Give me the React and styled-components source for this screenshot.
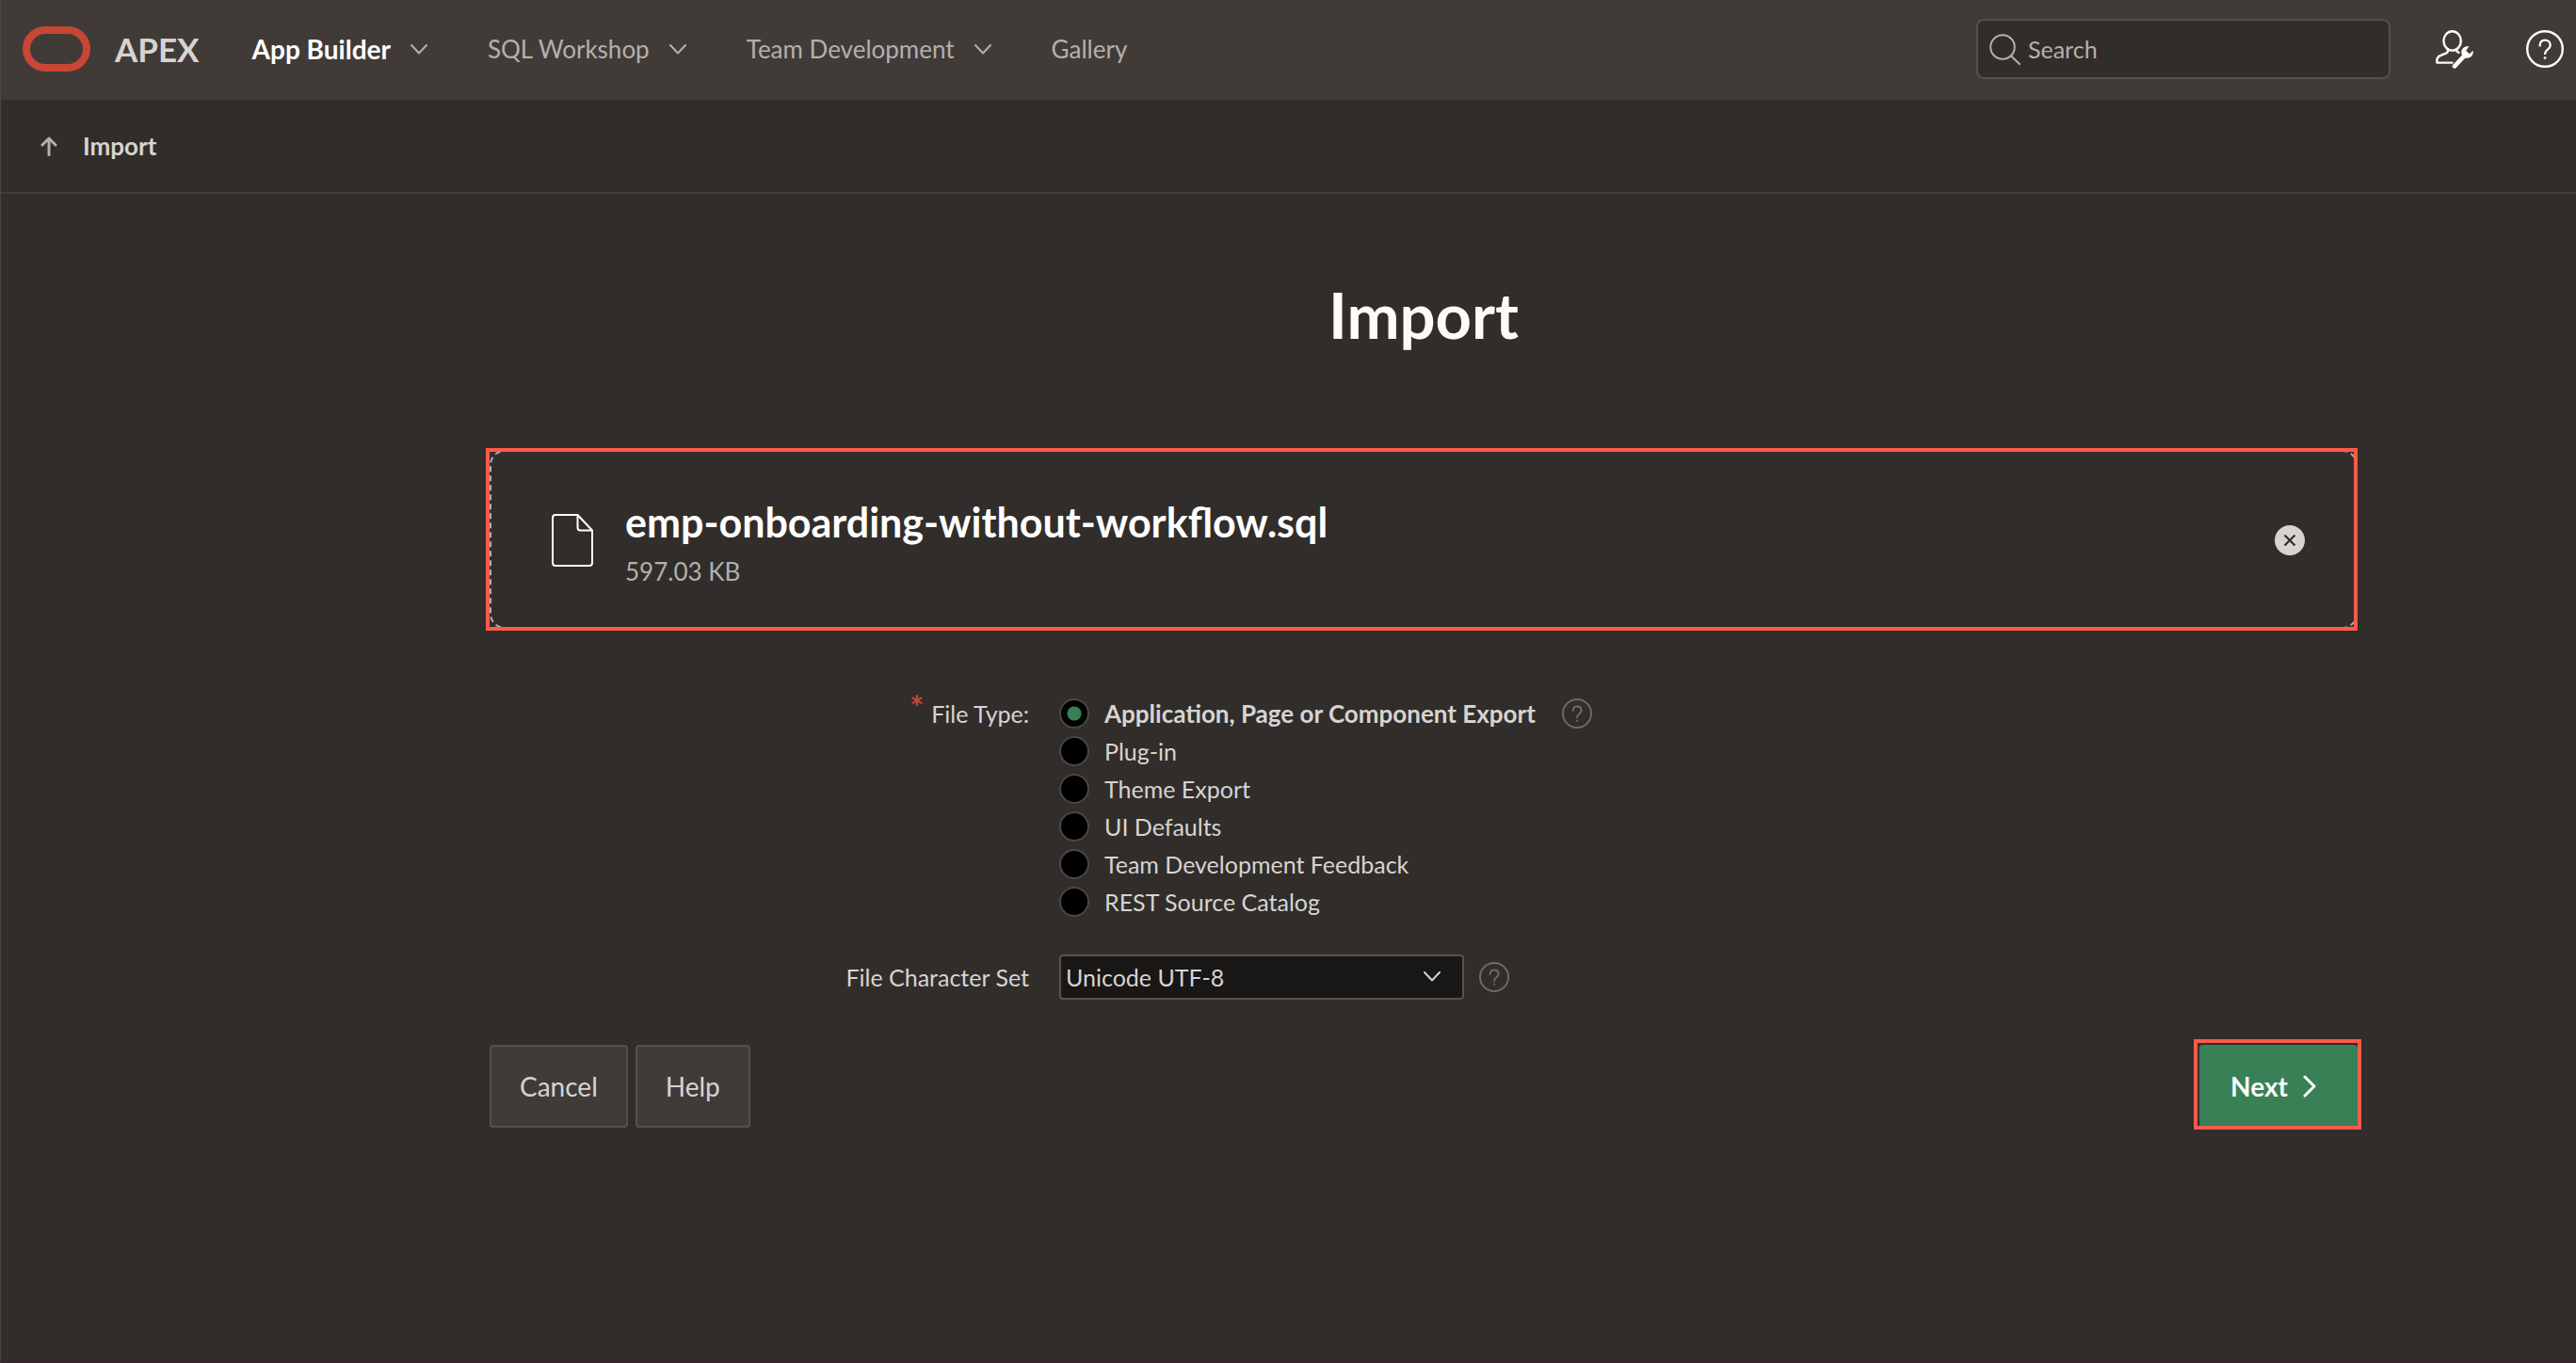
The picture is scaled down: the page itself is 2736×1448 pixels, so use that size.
import React, { useState } from "react";
import styled, { createGlobalStyle, css } from "styled-components";

const color = {
  page: "#312d2a",
  bar: "#413b38",
  line: "#403c39",
  border: "#55504d",
  text: "#d6d4d2",
  muted: "#b3b0ad",
  dim: "#6f6b68",
  green: "#398057",
  brand: "#c74634",
  callout: "#ff5a49",
};

const GlobalStyle = createGlobalStyle`
  *, *::before, *::after { box-sizing: border-box; }
  body {
    margin: 0;
    background: ${color.page};
    color: ${color.text};
    font-family: Lato, "Open Sans", sans-serif;
    font-size: 25px;
    line-height: 40px;
  }
  button, input, select { font: inherit; color: inherit; }
`;

const Page = styled.div`
  display: flex;
  flex-direction: column;
  min-height: 100vh;
  border-left: 1px solid #4a4542;
  border-bottom: 2px solid #35262b;
`;

const Header = styled.header`
  display: flex;
  align-items: center;
  height: 106px;
  padding: 0 13px 2px 23px;
  background: ${color.bar};
`;

const Brand = styled.a`
  display: flex;
  align-items: center;
  gap: 26px;
  color: ${color.text};
  font-size: 35px;
  font-weight: 700;
  text-decoration: none;
  svg { display: block; }
`;

const Nav = styled.nav`
  display: flex;
  align-items: center;
  gap: 64px;
  margin-left: 56px;
`;

const NavItem = styled.a`
  display: flex;
  align-items: center;
  gap: 21px;
  color: ${(p) => (p.$active ? "#fff" : color.muted)};
  font-size: ${(p) => (p.$active ? 28 : 26)}px;
  font-weight: ${(p) => (p.$active ? 700 : 400)};
  text-decoration: none;
  svg { color: ${color.muted}; }
`;

const SearchBox = styled.label`
  display: flex;
  align-items: center;
  gap: 8px;
  width: 440px;
  height: 64px;
  margin-left: auto;
  padding: 0 12px;
  border: 2px solid ${color.border};
  border-radius: 8px;
  background: ${color.page};
  color: ${color.muted};
  svg { flex: none; }
`;

const SearchInput = styled.input`
  flex: 1;
  min-width: 0;
  padding: 0;
  border: 0;
  outline: 0;
  background: none;
  &::placeholder { color: ${color.muted}; opacity: 1; }
`;

const IconButton = styled.button`
  display: flex;
  padding: 0;
  border: 0;
  background: none;
  color: ${(p) => p.$color || "#fcfbfa"};
  cursor: pointer;
`;

const HeaderTools = styled.div`
  display: flex;
  align-items: center;
  gap: 56px;
  margin-left: 48px;
`;

const Breadcrumb = styled.nav`
  display: flex;
  align-items: center;
  gap: 27px;
  height: 100px;
  padding: 0 42px;
  border-bottom: 2px solid ${color.line};
  font-size: 26px;
  font-weight: 700;
`;

const UpLink = styled.a`
  display: flex;
  color: ${color.muted};
`;

const Main = styled.main`
  flex: 1;
  padding: 88px 229px 48px 519px;
`;

const Title = styled.h1`
  margin: 0 0 104px;
  color: #fcfbfa;
  font-size: 67px;
  font-weight: 700;
  line-height: 80px;
  text-align: center;
`;

const Content = styled.form`
  max-width: 1984px;
`;

const FileCard = styled.section`
  position: relative;
  display: flex;
  align-items: center;
  height: 190px;
  padding: 2px 54px 0 64px;
  border: 2px dashed ${color.muted};
  border-radius: 16px;
`;

const Callout = styled.span`
  position: absolute;
  inset: ${(p) => p.$inset};
  border: 4px solid ${color.callout};
  pointer-events: none;
`;

const FileInfo = styled.div`
  flex: 1;
  display: flex;
  flex-direction: column;
  gap: 6px;
  padding: 8px 34px 0;
`;

const FileName = styled.strong`
  color: #fff;
  font-size: 43px;
  font-weight: 700;
  line-height: 52px;
`;

const FileSize = styled.span`
  color: ${color.muted};
  font-size: 26px;
`;

const Fields = styled.div`
  display: grid;
  grid-template-columns: minmax(0, 573px) 1fr;
  gap: 36px 32px;
  margin-top: 70px;
`;

const Label = styled.label`
  display: flex;
  justify-content: flex-end;
  gap: 8px;
  line-height: ${(p) => (p.$tall ? 48 : 40)}px;
`;

const Required = styled.span`
  color: ${color.brand};
  font-size: 35px;
  font-weight: 700;
  line-height: 24px;
`;

const Field = styled.div`
  display: flex;
  align-items: ${(p) => (p.$top ? "flex-start" : "center")};
  gap: ${(p) => (p.$top ? 28 : 16)}px;
`;

const RadioList = styled.div`
  display: flex;
  flex-direction: column;
`;

const RadioRow = styled.label`
  display: flex;
  align-items: center;
  gap: 16px;
  font-size: ${(p) => (p.$checked ? 26 : 25)}px;
  font-weight: ${(p) => (p.$checked ? 700 : 400)};
  line-height: 40px;
`;

const Radio = styled.input`
  appearance: none;
  width: 32px;
  height: 32px;
  margin: 0;
  border: 2px solid #4b4745;
  border-radius: 50%;
  background: #000;
  &:checked {
    background: radial-gradient(circle, ${color.green} 7px, #000 8px);
  }
`;

const HelpSlot = styled.div`
  display: flex;
  align-items: center;
  height: 40px;
`;

const SelectWrap = styled.div`
  position: relative;
  width: 430px;
  height: 48px;
  svg {
    position: absolute;
    top: 18px;
    right: 25px;
    pointer-events: none;
  }
`;

const Select = styled.select`
  appearance: none;
  width: 100%;
  height: 100%;
  padding: 0 48px 0 5px;
  border: 2px solid #5a524d;
  border-radius: 4px;
  background: #181715;
`;

const Actions = styled.div`
  display: flex;
  gap: 8px;
  margin-top: 48px;
`;

const Button = styled.button`
  position: relative;
  display: flex;
  align-items: center;
  gap: 16px;
  height: 88px;
  padding: 0 30px;
  border: 2px solid ${color.border};
  border-radius: 4px;
  background: ${color.bar};
  font-size: 28px;
  ${(p) =>
    p.$primary &&
    css`
      margin-left: auto;
      padding: 0 42px 0 31px;
      border-color: ${color.green};
      background: ${color.green};
      color: #fcfbfa;
      font-weight: 700;
    `}
`;

const Stroke = ({ w, h, width = 2, children }) => (
  <svg width={w} height={h} viewBox={`0 0 ${w} ${h}`} fill="none" stroke="currentColor" strokeWidth={width} strokeLinecap="round" strokeLinejoin="round" aria-hidden="true">
    {children}
  </svg>
);

const ChevronDown = () => (
  <Stroke w={18} h={11}><path d="M1 1l8 8.5L17 1" /></Stroke>
);

const HelpIcon = ({ size, width }) => (
  <svg width={size} height={size} viewBox="0 0 40 40" fill="none" stroke="currentColor" strokeWidth={width} strokeLinecap="round" aria-hidden="true">
    <circle cx="20" cy="20" r="18.8" />
    <path d="M14.6 16.4c0-3.6 2.3-5.8 5.5-5.8s5.6 2.1 5.6 5.3c0 4.9-5.6 4.5-5.6 9" />
    <circle cx="20.1" cy="29.6" r="1.4" fill="currentColor" stroke="none" />
  </svg>
);

const navItems = [
  { label: "App Builder", menu: true, active: true },
  { label: "SQL Workshop", menu: true },
  { label: "Team Development", menu: true },
  { label: "Gallery" },
];

const fileTypes = [
  "Application, Page or Component Export",
  "Plug-in",
  "Theme Export",
  "UI Defaults",
  "Team Development Feedback",
  "REST Source Catalog",
];

export default function App() {
  const [type, setType] = useState(fileTypes[0]);
  return (
    <>
      <GlobalStyle />
      <Page>
        <Header>
          <Brand href="#">
            <svg width="72" height="48" viewBox="0 0 72 48" fill="none" aria-hidden="true">
              <rect x="4" y="4" width="64" height="40" rx="20" stroke={color.brand} strokeWidth="8" />
            </svg>
            APEX
          </Brand>
          <Nav>
            {navItems.map((n) => (
              <NavItem key={n.label} href="#" $active={n.active}>
                {n.label}
                {n.menu && <ChevronDown />}
              </NavItem>
            ))}
          </Nav>
          <SearchBox>
            <Stroke w={33} h={33}>
              <circle cx="14" cy="14" r="12.8" />
              <path d="M23 23.5l9 8.5" />
            </Stroke>
            <SearchInput type="text" placeholder="Search" aria-label="Search" />
          </SearchBox>
          <HeaderTools>
            <IconButton aria-label="Administration">
              <svg width="40" height="41" viewBox="0 0 40 41" fill="none" stroke="currentColor" strokeWidth="2.4" strokeLinecap="round" strokeLinejoin="round" aria-hidden="true">
                <ellipse cx="17.6" cy="11.4" rx="9.2" ry="10.2" />
                <path d="M12.8 20.6v1.8c0 .9-.5 1.500-1.400 1.900l-6.600 2.800C2.400 28.200 1.300 29.800 1.300 32v2.600H17.500" />
                <path d="M22.200 20.600v1.600l2.300 1.700" />
                <path d="M20 38.400L32.300 25.200" strokeWidth="4.600" />
                <path d="M35.500 17.600c-4-1.200-8 1.400-8.200 5.600-.1 4.300 3.200 6.700 6.400 6.500 3.900-.2 6.700-3.800 6-8l-3.900 3.600-3.700-3.500z" fill="currentColor" stroke="none" />
              </svg>
            </IconButton>
            <IconButton aria-label="Help menu">
              <HelpIcon size={40} width={2.4} />
            </IconButton>
          </HeaderTools>
        </Header>

        <Breadcrumb>
          <UpLink href="#" aria-label="Up">
            <Stroke w={18} h={21} width={3}><path d="M9 19.500V2M2 9l7-7 7 7" /></Stroke>
          </UpLink>
          <span>Import</span>
        </Breadcrumb>

        <Main>
          <Content onSubmit={(e) => e.preventDefault()}>
            <Title>Import</Title>
            <FileCard>
              <svg width="44" height="56" viewBox="0 0 44 56" fill="none" stroke="#fff" strokeWidth="2" strokeLinejoin="round" aria-hidden="true">
                <path d="M4 1H27.500L43 17.500V52a3 3 0 0 1-3 3H4a3 3 0 0 1-3-3V4a3 3 0 0 1 3-3z" />
                <path d="M27.500 1v13.500a3 3 0 0 0 3 3H43" />
              </svg>
              <FileInfo>
                <FileName>emp-onboarding-without-workflow.sql</FileName>
                <FileSize>597.03 KB</FileSize>
              </FileInfo>
              <IconButton type="button" aria-label="Remove file" $color={color.text}>
                <svg width="32" height="32" viewBox="0 0 32 32" aria-hidden="true">
                  <circle cx="16" cy="16" r="16" fill="currentColor" />
                  <path d="M10.500 10.500l11 11M21.500 10.500l-11 11" stroke={color.page} strokeWidth="2.200" />
                </svg>
              </IconButton>
              <Callout $inset="-4px -2px -4px -6px" />
            </FileCard>

            <Fields>
              <Label as="div" id="file-type">
                <Required>*</Required>
                File Type:
              </Label>
              <Field $top>
                <RadioList role="radiogroup" aria-labelledby="file-type">
                  {fileTypes.map((t) => (
                    <RadioRow key={t} $checked={t === type}>
                      <Radio type="radio" name="type" checked={t === type} onChange={() => setType(t)} />
                      {t}
                    </RadioRow>
                  ))}
                </RadioList>
                <HelpSlot>
                  <IconButton type="button" aria-label="Help: File Type" $color={color.dim}>
                    <HelpIcon size={32} width={2.4} />
                  </IconButton>
                </HelpSlot>
              </Field>

              <Label $tall htmlFor="charset">File Character Set</Label>
              <Field>
                <SelectWrap>
                  <Select id="charset" defaultValue="utf8">
                    <option value="utf8">Unicode UTF-8</option>
                  </Select>
                  <ChevronDown />
                </SelectWrap>
                <IconButton type="button" aria-label="Help: File Character Set" $color={color.dim}>
                  <HelpIcon size={32} width={2.4} />
                </IconButton>
              </Field>
            </Fields>

            <Actions>
              <Button type="button">Cancel</Button>
              <Button type="button">Help</Button>
              <Button type="submit" $primary>
                Next
                <Stroke w={14} h={24} width={3}><path d="M2 2l10 10L2 22" /></Stroke>
                <Callout $inset="-8px -6px -4px -8px" />
              </Button>
            </Actions>
          </Content>
        </Main>
      </Page>
    </>
  );
}
